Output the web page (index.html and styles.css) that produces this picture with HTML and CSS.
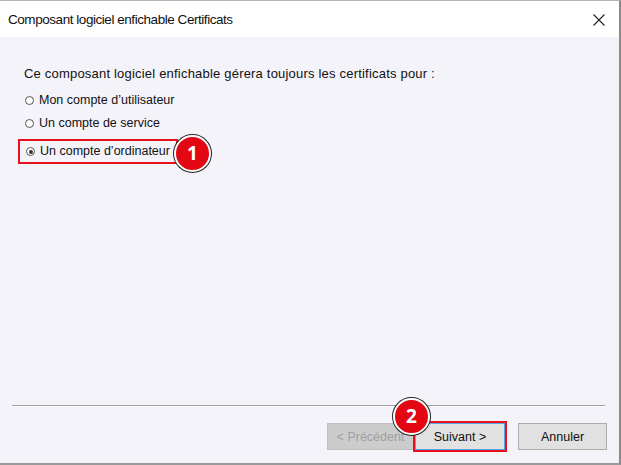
FILE: index.html
```html
<!DOCTYPE html>
<html lang="fr">
<head>
<meta charset="utf-8">
<link rel="stylesheet" href="styles.css">
</head>
<body>
<div class="window">
  <div class="titlebar">
    <span class="title">Composant logiciel enfichable Certificats</span>
    <svg class="close" width="12" height="12" viewBox="0 0 12 12"><path d="M0.5 0.5L11.5 11.5M11.5 0.5L0.5 11.5" stroke="#222" stroke-width="1.1" fill="none"/></svg>
  </div>
  <div class="content">
    <p class="intro">Ce composant logiciel enfichable gérera toujours les certificats pour :</p>
    <div class="options">
      <label class="option"><span class="radio"></span>Mon compte d’utilisateur</label>
      <label class="option"><span class="radio"></span>Un compte de service</label>
      <label class="option selected"><span class="radio checked"></span>Un compte d’ordinateur<span class="badge badge-1">1</span></label>
    </div>
  </div>
  <div class="footer">
    <div class="separator"></div>
    <div class="buttons">
      <button class="btn disabled">&lt; Précédent</button>
      <button class="btn primary">Suivant &gt;<span class="badge badge-2">2</span></button>
      <button class="btn cancel">Annuler</button>
    </div>
  </div>
</div>
</body>
</html>
```
FILE: styles.css
```css
* { box-sizing: border-box; }
html, body { margin: 0; padding: 0; }
body {
  width: 621px;
  height: 465px;
  background: #fff;
  font-family: "Liberation Sans", Arial, sans-serif;
  color: #1a1a1a;
  overflow: hidden;
}
.window {
  width: 621px;
  height: 465px;
  display: flex;
  flex-direction: column;
  border-top: 1px solid #b4b4b4;
  border-right: 2px solid #8a8a8a;
  border-bottom: 2px solid #9a9a9a;
  background: #f4f3f9;
}
.titlebar {
  height: 36px;
  background: #fff;
  display: flex;
  align-items: center;
  justify-content: space-between;
  padding: 0 14px 0 8px;
  flex: none;
}
.title {
  font-family: "Liberation Sans", Arial, sans-serif;
  font-size: 13.5px;
  color: #111;
  letter-spacing: -0.45px;
  margin-top: 1px;
}
.close { margin-top: 1px; }
.content {
  flex: 1;
  padding: 30px 0 0 24px;
}
.intro {
  margin: 0 0 12px 0;
  line-height: 14px;
  font-size: 13px;
  letter-spacing: 0.2px;
  color: #111;
}
.options {
  display: flex;
  flex-direction: column;
  gap: 8px;
  margin-left: 1px;
}
.option {
  position: relative;
  display: flex;
  align-items: center;
  height: 15px;
  line-height: 15px;
  font-size: 12.5px;
  color: #111;
}
.option.selected {
  margin-left: -7px;
  padding-left: 6px;
  width: 160px;
  height: 25px;
  border: 2px solid #e8101c;
  background: #f4f3f9;
}
.radio {
  width: 9px;
  height: 9px;
  border: 1px solid #555;
  border-radius: 50%;
  background: #fff;
  margin-right: 5px;
  flex: none;
  position: relative;
}
.radio.checked::after {
  content: "";
  position: absolute;
  left: 1.5px;
  top: 1.5px;
  width: 4px;
  height: 4px;
  border-radius: 50%;
  background: #333;
}
.badge {
  position: absolute;
  width: 37px;
  height: 37px;
  border-radius: 50%;
  background: #e30613;
  border: 2px solid #fff;
  box-shadow: 0 0 0 1px #222;
  color: #fff;
  font-family: "Open Sans", sans-serif;
  font-weight: 700;
  font-size: 19px;
  display: flex;
  align-items: center;
  justify-content: center;
  line-height: 1;
}
.badge-1 { left: 154px; top: -6px; }
.badge-2 { left: -22px; top: -25px; }
.footer {
  flex: none;
  padding: 0 14px 11px 12px;
}
.separator {
  height: 2px;
  border-top: 1px solid #a0a0a0;
  border-bottom: 1px solid #fff;
}
.buttons {
  display: flex;
  justify-content: flex-end;
  margin-top: 14px;
  margin-right: -2px;
  align-items: center;
}
.btn {
  font-family: "Liberation Sans", Arial, sans-serif;
  font-size: 12.5px;
  height: 27px;
  padding: 0;
  border: 1px solid #adadad;
  background: #e1e1e1;
  color: #111;
  position: relative;
}
.btn.disabled {
  width: 87px;
  color: #a0a0a0;
  background: #cccccc;
  border-color: #bfbfbf;
}
.btn.primary {
  width: 94px;
  height: 31px;
  margin-left: -1px;
  border: 2px solid #e8101c;
  background: #e1e1e1;
  box-shadow: inset 0 0 0 1px #5aa7e6;
}
.btn.cancel {
  width: 89px;
  margin-left: 11px;
}
```
